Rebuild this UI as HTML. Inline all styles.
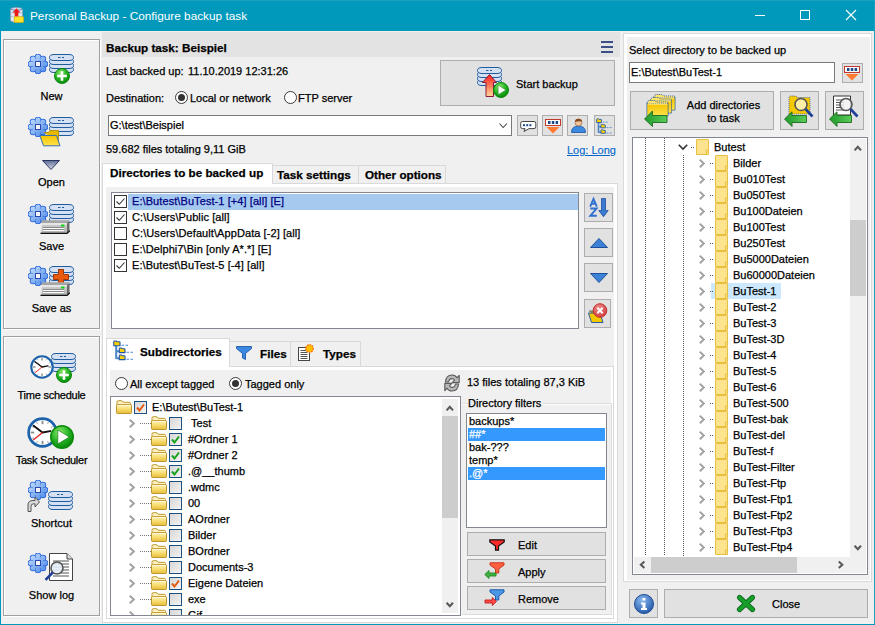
<!DOCTYPE html><html><head><meta charset="utf-8"><style>
*{box-sizing:border-box;margin:0;padding:0}
html,body{width:875px;height:625px;overflow:hidden;background:#f0f0f0}
body{position:relative;font-family:"Liberation Sans",sans-serif;font-size:11px;color:#000;-webkit-text-stroke:0.25px currentColor}
.a{position:absolute}
.t{position:absolute;white-space:nowrap;line-height:13px;height:13px}
.b{font-weight:bold;font-size:11.7px}
.btn{position:absolute;background:#e1e1e1;border:1px solid #adadad}
.edit{position:absolute;background:#fff;border:1px solid #7a7a7a}
.lb{position:absolute;background:#fff;border:1px solid #828790}
.cb{position:absolute;width:13px;height:13px;border:1px solid #333;background:#fff}
.cb2{position:absolute;width:13px;height:13px;border:1px solid #1c5180;background:linear-gradient(135deg,#d6d6d6,#f4f4f4)}
.rad{position:absolute;width:13px;height:13px;border:1.1px solid #3a3a3a;border-radius:50%;background:#fff}
.rad.on::after{content:"";position:absolute;left:2px;top:2px;width:7px;height:7px;border-radius:50%;background:#333}
svg{position:absolute;overflow:visible}
.bev{position:absolute;border:1px solid #a0a0a0;box-shadow:inset 1px 1px 0 #fff,1px 1px 0 #fff}
.tab{position:absolute;background:#f0f0f0;border:1px solid #d9d9d9}
.page{position:absolute;background:#fff;border:1px solid #d9d9d9}
</style></head><body>
<svg width="0" height="0" style="position:absolute"><defs>
<linearGradient id="gGear" gradientUnits="userSpaceOnUse" x1="3" y1="3" x2="17" y2="17"><stop offset="0" stop-color="#bcd8fc"/><stop offset="1" stop-color="#5590e8"/></linearGradient>
<radialGradient id="gGreen" cx="0.4" cy="0.3" r="0.7"><stop offset="0" stop-color="#8ee86a"/><stop offset="0.6" stop-color="#22b022"/><stop offset="1" stop-color="#0a8a0a"/></radialGradient>
<linearGradient id="gFold" x1="0" y1="0" x2="0" y2="1"><stop offset="0" stop-color="#fff6c0"/><stop offset="0.5" stop-color="#f8dc70"/><stop offset="1" stop-color="#e6bc38"/></linearGradient>
<linearGradient id="gFoldY" x1="0" y1="0" x2="0" y2="1"><stop offset="0" stop-color="#f5c400"/><stop offset="1" stop-color="#ffe14a"/></linearGradient>
<linearGradient id="gArrowR" x1="0" y1="0" x2="0" y2="1"><stop offset="0" stop-color="#ff1a1a"/><stop offset="1" stop-color="#ffd89a"/></linearGradient>
<linearGradient id="gArrowG" x1="0" y1="0" x2="1" y2="0"><stop offset="0" stop-color="#1f9a2a"/><stop offset="1" stop-color="#5ccc5a"/></linearGradient>
<linearGradient id="gTri" x1="0" y1="0" x2="0" y2="1"><stop offset="0" stop-color="#5a6a94"/><stop offset="1" stop-color="#d8dcea"/></linearGradient>
<linearGradient id="gDrive" x1="0" y1="0" x2="0" y2="1"><stop offset="0" stop-color="#d0d0d0"/><stop offset="1" stop-color="#b0b0b0"/></linearGradient>
<radialGradient id="gInfo" cx="0.4" cy="0.3" r="0.75"><stop offset="0" stop-color="#8ab8f0"/><stop offset="1" stop-color="#1f56a8"/></radialGradient>
<radialGradient id="gRed" cx="0.4" cy="0.3" r="0.75"><stop offset="0" stop-color="#f08a8a"/><stop offset="1" stop-color="#d03a3a"/></radialGradient>
<symbol id="gear" viewBox="0 0 20 20"><g fill="#2560d8" stroke="#2560d8" stroke-width="1.6"><circle cx="17.00" cy="10.00" r="2.5"/><circle cx="14.95" cy="14.95" r="2.5"/><circle cx="10.00" cy="17.00" r="2.5"/><circle cx="5.05" cy="14.95" r="2.5"/><circle cx="3.00" cy="10.00" r="2.5"/><circle cx="5.05" cy="5.05" r="2.5"/><circle cx="10.00" cy="3.00" r="2.5"/><circle cx="14.95" cy="5.05" r="2.5"/><circle cx="10" cy="10" r="5.6"/></g><g fill="url(#gGear)"><circle cx="17.00" cy="10.00" r="2.5"/><circle cx="14.95" cy="14.95" r="2.5"/><circle cx="10.00" cy="17.00" r="2.5"/><circle cx="5.05" cy="14.95" r="2.5"/><circle cx="3.00" cy="10.00" r="2.5"/><circle cx="5.05" cy="5.05" r="2.5"/><circle cx="10.00" cy="3.00" r="2.5"/><circle cx="14.95" cy="5.05" r="2.5"/><circle cx="10" cy="10" r="5.6"/></g><rect x="7.5" y="7.5" width="5" height="5" fill="#f4f4f4" stroke="#2848b0" stroke-width="1"/></symbol>
<symbol id="db" viewBox="0 0 25 19"><rect x="0.5" y="12.5" width="24" height="6" rx="4.5" ry="3" fill="#d5e0f2" stroke="#1f5c9e" stroke-width="1"/><rect x="0.5" y="8.5" width="24" height="6" rx="4.5" ry="3" fill="#d5e0f2" stroke="#1f5c9e" stroke-width="1"/><rect x="0.5" y="4.5" width="24" height="6" rx="4.5" ry="3" fill="#d5e0f2" stroke="#1f5c9e" stroke-width="1"/><rect x="0.5" y="0.5" width="24" height="6" rx="4.5" ry="3" fill="#d5e0f2" stroke="#1f5c9e" stroke-width="1"/><path d="M9 3.5h2.5M13 3.5h2" stroke="#1f5c9e" stroke-width="1"/></symbol>
<symbol id="plus" viewBox="0 0 16 16"><circle cx="8" cy="8" r="7.5" fill="url(#gGreen)" stroke="#0c8a0c" stroke-width="1"/><path d="M8 3.2v9.6M3.2 8h9.6" stroke="#fff" stroke-width="2.6"/></symbol>
<symbol id="play" viewBox="0 0 16 16"><circle cx="8" cy="8" r="7.5" fill="url(#gGreen)" stroke="#0c8a0c" stroke-width="1"/><path d="M5.2 3.3L12.9 8L5.2 12.7Z" fill="#fff" stroke="#0a6a0a" stroke-width="0.4"/></symbol>
<symbol id="drive" viewBox="0 0 30 14"><path d="M2.5 0.3H29.5L27 3.5H0.5Z" fill="#a6a6a6"/><rect x="0.5" y="3.5" width="26.5" height="9.5" fill="url(#gDrive)"/><path d="M1 4H26.5M1 4V12.5" stroke="#fff" stroke-width="1"/><path d="M27 3.5L29.5 0.5V11L27 13.3Z" fill="#6a6a6a"/><path d="M0.5 13.4H27L29.8 10.8" fill="none" stroke="#111" stroke-width="1.3"/><path d="M3 7.5H24M3 9.5H24" stroke="#8a8a8a" stroke-width="1"/><path d="M3 8.5H24M3 10.5H24" stroke="#fafafa" stroke-width="1"/><rect x="21" y="4.5" width="3.5" height="2" fill="#12d412"/></symbol>
<symbol id="clock" viewBox="0 0 32 32"><circle cx="16" cy="16" r="14.3" fill="#fff" stroke="#1c63ab" stroke-width="2.8"/><line x1="24.60" y1="16.00" x2="28.20" y2="16.00" stroke="#8a8a8a" stroke-width="1.8"/><line x1="24.83" y1="21.10" x2="26.57" y2="22.10" stroke="#b0b0b0" stroke-width="1.2"/><line x1="21.10" y1="24.83" x2="22.10" y2="26.57" stroke="#b0b0b0" stroke-width="1.2"/><line x1="16.00" y1="24.60" x2="16.00" y2="28.20" stroke="#8a8a8a" stroke-width="1.8"/><line x1="10.90" y1="24.83" x2="9.90" y2="26.57" stroke="#b0b0b0" stroke-width="1.2"/><line x1="7.17" y1="21.10" x2="5.43" y2="22.10" stroke="#b0b0b0" stroke-width="1.2"/><line x1="7.40" y1="16.00" x2="3.80" y2="16.00" stroke="#8a8a8a" stroke-width="1.8"/><line x1="7.17" y1="10.90" x2="5.43" y2="9.90" stroke="#b0b0b0" stroke-width="1.2"/><line x1="10.90" y1="7.17" x2="9.90" y2="5.43" stroke="#b0b0b0" stroke-width="1.2"/><line x1="16.00" y1="7.40" x2="16.00" y2="3.80" stroke="#8a8a8a" stroke-width="1.8"/><line x1="21.10" y1="7.17" x2="22.10" y2="5.43" stroke="#b0b0b0" stroke-width="1.2"/><line x1="24.83" y1="10.90" x2="26.57" y2="9.90" stroke="#b0b0b0" stroke-width="1.2"/><path d="M16 16L6.8 9M16 16L24 14.5" stroke="#111" stroke-width="1.9" stroke-linecap="round"/><path d="M16 16L6.5 23.8" stroke="#e01818" stroke-width="1.2"/></symbol>
<symbol id="foldT" viewBox="0 0 16 14"><path d="M1 12V2Q1 0.7 2.2 0.7H5.8L7.2 2.3H13.3Q14.5 2.3 14.5 3.5V6H1Z" fill="#fdf2c0" stroke="#c09530" stroke-width="1"/><path d="M0.5 5.4Q0.5 4.6 1.3 4.6H14.7Q15.5 4.6 15.5 5.4V12.7Q15.5 13.5 14.7 13.5H1.3Q0.5 13.5 0.5 12.7Z" fill="url(#gFold)" stroke="#c09530" stroke-width="1"/><path d="M1.5 5.6H14.5" stroke="#fff8d8" stroke-width="0.9"/></symbol>
<symbol id="foldR" viewBox="0 0 13 16"><path d="M0.5 1Q0.5 0.5 1 0.5H12Q12.5 0.5 12.5 1V15.5H0.5Z" fill="#fde38e" stroke="#e8c040" stroke-width="1"/><path d="M10.5 11V15.5M10.5 11H12.5" stroke="#e8c040" stroke-width="1"/></symbol>
</defs></svg>
<div class="a" style="left:0;top:0;width:875px;height:31px;background:#0099bc"></div>
<div class="a" style="left:0;top:0;width:1px;height:625px;background:#0099bc"></div>
<div class="a" style="left:874px;top:0;width:1px;height:625px;background:#1ba0c0"></div>
<div class="a" style="left:0;top:0;width:875px;height:1px;background:#1ba0c0"></div>
<div class="a" style="left:0;top:624px;width:875px;height:1px;background:#0099bc"></div>
<svg style="left:10px;top:7px" width="14" height="16"><path d="M0.5 2.5Q0.5 0.5 6.5 0.5Q12.5 0.5 12.5 2.5V13Q12.5 15.2 6.5 15.2Q0.5 15.2 0.5 13Z" fill="#dfe8f2" stroke="#8a9bb0" stroke-width="0.8"/><path d="M1 5.5Q6.5 7.5 12 5.5M1 9.5Q6.5 11.5 12 9.5" fill="none" stroke="#a8b8cc" stroke-width="0.8"/><path d="M1 2.5Q6.5 4.5 12 2.5" fill="none" stroke="#5a8ad0" stroke-width="1"/><path d="M6.5 1.2L10.5 5.5H8.3V9.8H4.7V5.5H2.5Z" fill="#ee1a1a"/><rect x="4.2" y="9.8" width="9.3" height="5.6" fill="#ffe22a" stroke="#d8b000" stroke-width="0.6"/></svg>
<div class="t" style="left:30px;top:8.5px;color:#fff;-webkit-text-stroke:0;font-size:11.8px;line-height:14px;height:14px">Personal Backup - Configure backup task</div>
<div class="a" style="left:755px;top:15px;width:10px;height:1px;background:#fff"></div>
<div class="a" style="left:800px;top:10px;width:10px;height:10px;border:1px solid #fff"></div>
<svg style="left:846px;top:10px" width="10" height="10"><path d="M0 0L10 10M10 0L0 10" stroke="#fff" stroke-width="1.1"/></svg>
<div class="bev" style="left:3px;top:39px;width:97px;height:290px"></div>
<div class="bev" style="left:3px;top:336px;width:97px;height:280px"></div>
<div class="t" style="left:0;top:90px;width:103px;text-align:center;">New</div>
<div class="t" style="left:0;top:176px;width:103px;text-align:center;">Open</div>
<div class="t" style="left:0;top:240px;width:103px;text-align:center;">Save</div>
<div class="t" style="left:0;top:302px;width:103px;text-align:center;">Save as</div>
<div class="t" style="left:0;top:389px;width:103px;text-align:center;letter-spacing:-0.25px;">Time schedule</div>
<div class="t" style="left:0;top:454px;width:103px;text-align:center;letter-spacing:-0.25px;">Task Scheduler</div>
<div class="t" style="left:0;top:517px;width:103px;text-align:center;">Shortcut</div>
<div class="t" style="left:0;top:589px;width:103px;text-align:center;">Show log</div>
<svg style="left:28px;top:54px" width="20" height="20" viewBox="0 0 20 20"><use href="#gear" x="0" y="0" width="20" height="20"/></svg>
<svg style="left:49px;top:54px" width="25" height="19" viewBox="0 0 25 19"><use href="#db" x="0" y="0" width="25" height="19"/></svg>
<svg style="left:54px;top:68px" width="16" height="16" viewBox="0 0 16 16"><use href="#plus" x="0" y="0" width="16" height="16"/></svg>
<svg style="left:28px;top:117px" width="20" height="20" viewBox="0 0 20 20"><use href="#gear" x="0" y="0" width="20" height="20"/></svg>
<svg style="left:49px;top:117px" width="25" height="19" viewBox="0 0 25 19"><use href="#db" x="0" y="0" width="25" height="19"/></svg>
<svg style="left:39px;top:129px" width="22" height="18"><path d="M5 3.5H9.5L11 1.5H19.5V14" fill="#e8b800" stroke="#b08a00" stroke-width="0.8"/><path d="M0.8 6.5H17.5L21 16.8H4.5Z" fill="url(#gFoldY)" stroke="#3a70b0" stroke-width="1"/></svg>
<svg style="left:42px;top:160px" width="18" height="10"><path d="M0.5 0.5H17.5L9 9.5Z" fill="url(#gTri)" stroke="#2a3460" stroke-width="1"/></svg>
<svg style="left:28px;top:204px" width="20" height="20" viewBox="0 0 20 20"><use href="#gear" x="0" y="0" width="20" height="20"/></svg>
<svg style="left:49px;top:204px" width="25" height="19" viewBox="0 0 25 19"><use href="#db" x="0" y="0" width="25" height="19"/></svg>
<svg style="left:40px;top:220px" width="30" height="14" viewBox="0 0 30 14"><use href="#drive" x="0" y="0" width="30" height="14"/></svg>
<svg style="left:28px;top:266px" width="20" height="20" viewBox="0 0 20 20"><use href="#gear" x="0" y="0" width="20" height="20"/></svg>
<svg style="left:49px;top:266px" width="25" height="19" viewBox="0 0 25 19"><use href="#db" x="0" y="0" width="25" height="19"/></svg>
<svg style="left:53px;top:269px" width="16" height="16"><path d="M5.5 0.5h5v5h5v5h-5v5h-5v-5h-5v-5h5Z" fill="#e85a10" stroke="#a83800" stroke-width="1"/></svg>
<svg style="left:40px;top:282px" width="30" height="14" viewBox="0 0 30 14"><use href="#drive" x="0" y="0" width="30" height="14"/></svg>
<svg style="left:51px;top:353px" width="25" height="19" viewBox="0 0 25 19"><use href="#db" x="0" y="0" width="25" height="19"/></svg>
<svg style="left:30px;top:355px" width="24" height="24" viewBox="0 0 24 24"><use href="#clock" x="0" y="0" width="24" height="24"/></svg>
<svg style="left:56px;top:367px" width="16" height="16" viewBox="0 0 16 16"><use href="#plus" x="0" y="0" width="16" height="16"/></svg>
<svg style="left:27px;top:417px" width="31" height="31" viewBox="0 0 31 31"><use href="#clock" x="0" y="0" width="31" height="31"/></svg>
<svg style="left:50px;top:425px" width="24" height="24" viewBox="0 0 24 24"><use href="#play" x="0" y="0" width="24" height="24"/></svg>
<svg style="left:28px;top:480px" width="20" height="20" viewBox="0 0 20 20"><use href="#gear" x="0" y="0" width="20" height="20"/></svg>
<svg style="left:48px;top:491px" width="25" height="19" viewBox="0 0 25 19"><use href="#db" x="0" y="0" width="25" height="19"/></svg>
<svg style="left:27px;top:496px" width="13" height="16"><path d="M1 15.5V9Q1 4.5 6 4.5H8V1L12.5 6L8 11V7.8H6.5Q4 7.8 4 10.5V15.5Z" fill="#d8d8d8" stroke="#555" stroke-width="1"/></svg>
<svg style="left:28px;top:553px" width="20" height="20" viewBox="0 0 20 20"><use href="#gear" x="0" y="0" width="20" height="20"/></svg>
<svg style="left:44px;top:553px" width="30" height="29"><path d="M5.5 0.5H23L28.5 6V27.5H5.5Z" fill="#fff" stroke="#444" stroke-width="1"/><path d="M23 0.5V6H28.5" fill="#ddd" stroke="#444" stroke-width="1"/><path d="M9 8h16" stroke="#555" stroke-width="1"/><path d="M9 11h16" stroke="#555" stroke-width="1"/><path d="M9 14h16" stroke="#555" stroke-width="1"/><path d="M9 17h16" stroke="#555" stroke-width="1"/><path d="M9 20h16" stroke="#555" stroke-width="1"/><path d="M9 23h16" stroke="#555" stroke-width="1"/><circle cx="13" cy="15" r="6" fill="rgba(230,240,250,0.85)" stroke="#555" stroke-width="1.6"/><path d="M8.8 19.5L1.5 26.8" stroke="#1e3f9a" stroke-width="2.6"/></svg>
<div class="a" style="left:102px;top:32px;width:518px;height:25px;background:#e3e3e3"></div>
<div class="t b" style="left:106px;top:41px">Backup task: Beispiel</div>
<div class="a" style="left:601px;top:41px;width:12px;height:2px;background:#3c4f86"></div>
<div class="a" style="left:601px;top:46px;width:12px;height:2px;background:#3c4f86"></div>
<div class="a" style="left:601px;top:51px;width:12px;height:2px;background:#3c4f86"></div>
<div class="t" style="left:106px;top:65px">Last backed up:</div>
<div class="t" style="left:188px;top:65px">11.10.2019 12:31:26</div>
<div class="t" style="left:106px;top:92px">Destination:</div>
<div class="rad on" style="left:175px;top:91px"></div>
<div class="t" style="left:190px;top:92px">Local or network</div>
<div class="rad" style="left:284px;top:91px"></div>
<div class="t" style="left:298px;top:92px">FTP server</div>
<div class="btn" style="left:440px;top:60px;width:175px;height:46px"></div>
<svg style="left:477px;top:67px" width="25" height="19" viewBox="0 0 25 19"><use href="#db" x="0" y="0" width="25" height="19"/></svg>
<svg style="left:482px;top:74px" width="16" height="24"><path d="M7.5 0.5L14.5 8.5H11.5V22.5H4V8.5H0.5Z" fill="url(#gArrowR)" stroke="#8a1a3a" stroke-width="1"/></svg>
<svg style="left:493px;top:82px" width="16" height="16" viewBox="0 0 16 16"><use href="#play" x="0" y="0" width="16" height="16"/></svg>
<div class="t" style="left:516px;top:78px">Start backup</div>
<div class="edit" style="left:108px;top:115px;width:404px;height:21px"></div>
<div class="t" style="left:110px;top:119px">G:\test\Beispiel</div>
<svg style="left:499px;top:123px" width="9" height="6"><path d="M0.5 0.5L4.2 4.5L7.9 0.5" fill="none" stroke="#444" stroke-width="1.1"/></svg>
<div class="btn" style="left:517px;top:115px;width:21px;height:21px"></div>
<div class="btn" style="left:542px;top:115px;width:21px;height:21px"></div>
<div class="btn" style="left:567px;top:115px;width:21px;height:21px"></div>
<div class="btn" style="left:594px;top:115px;width:21px;height:21px"></div>
<svg style="left:520px;top:121px" width="17" height="12"><path d="M2.5 0.5H14Q15.8 0.5 15.8 2.3V5.8Q15.8 7.6 14 7.6H9L4 10.5L5 7.6H2.5Q0.7 7.6 0.7 5.8V2.3Q0.7 0.5 2.5 0.5Z" fill="#fff" stroke="#444" stroke-width="1"/><rect x="3" y="3.2" width="2" height="2" fill="#1e4a8a"/><rect x="6.2" y="3.2" width="2" height="2" fill="#1e4a8a"/><rect x="9.4" y="3.2" width="2" height="2" fill="#1e4a8a"/></svg>
<svg style="left:545px;top:119px" width="16" height="15"><rect x="0.5" y="0.5" width="15" height="6" fill="#fff" stroke="#c0392b" stroke-width="1"/><rect x="3" y="2" width="2.5" height="3" fill="#1e4a8a"/><rect x="6.8" y="2" width="2.5" height="3" fill="#1e4a8a"/><rect x="10.6" y="2" width="2.5" height="3" fill="#1e4a8a"/><path d="M1.5 8H14.5L8 14.5Z" fill="#ff7a30"/></svg>
<svg style="left:571px;top:118px" width="15" height="15"><path d="M0.5 14.5Q0.5 8 7.5 8Q14.5 8 14.5 14.5Z" fill="#3a8ae0" stroke="#1d4f9a" stroke-width="0.8"/><circle cx="7.5" cy="4.5" r="3.5" fill="#f2c29a" stroke="#8a5a3a" stroke-width="0.6"/><path d="M4 4Q4 0.8 7.5 0.8Q11 0.8 11 4Q9 2.5 4 4Z" fill="#8a4a20"/></svg>
<svg style="left:596px;top:118px" width="16.4" height="16.4" viewBox="0 0 21 21"><path d="M3.2 5V19M3.2 11.3H6.5M3.2 18.3H6.5" stroke="#4a86cc" stroke-width="2" fill="none"/><path d="M0.8 5.8V1.8Q0.8 1 1.6 1H3.2L3.8 1.8H6.4Q7 1.8 7 2.4V5.8Z" fill="#ffd200" stroke="#1f56a6" stroke-width="1.1"/><path d="M6.3 12.6V8.8Q6.3 8 7.1 8H8.6L9.2 8.8H11.4Q12 8.8 12 9.4V12.6Z" fill="#ffd200" stroke="#1f56a6" stroke-width="1.1"/><path d="M6.3 19.6V15.8Q6.3 15 7.1 15H8.6L9.2 15.8H11.4Q12 15.8 12 16.4V19.6Z" fill="#ffd200" stroke="#1f56a6" stroke-width="1.1"/><path d="M8.5 5.3H11M12.5 5.3H15M13.5 12.3H16M17.5 12.3H20M13.5 19.3H16M17.5 19.3H20" stroke="#4a86cc" stroke-width="1.1"/></svg>
<div class="t" style="left:106px;top:143px">59.682 files totaling 9,11 GiB</div>
<div class="t" style="left:567px;top:144px;color:#0066cc;text-decoration:underline;-webkit-text-stroke:0.1px #0066cc">Log: Long</div>
<div class="page" style="left:102px;top:183px;width:516px;height:440px"></div>
<div class="a" style="left:106px;top:187px;width:508px;height:432px;background:#f0f0f0"></div>
<div class="tab" style="left:272px;top:165px;width:87px;height:19px"></div>
<div class="tab" style="left:358px;top:165px;width:88px;height:19px"></div>
<div class="a" style="left:102px;top:163px;width:171px;height:21px;background:#fff;border:1px solid #d9d9d9;border-bottom:none"></div>
<div class="t b" style="left:110px;top:166px">Directories to be backed up</div>
<div class="t b" style="left:277px;top:168px">Task settings</div>
<div class="t b" style="left:365px;top:168px">Other options</div>
<div class="lb" style="left:111px;top:192px;width:468px;height:137px"></div>
<div class="a" style="left:128px;top:194px;width:450px;height:16px;background:#a6c9f0"></div>
<div class="cb" style="left:114px;top:195px"></div>
<svg style="left:114px;top:195px" width="13" height="13"><path d="M2.5 6.5L5.3 9.3L10.5 3.5" fill="none" stroke="#333" stroke-width="1.1"/></svg>
<div class="t" style="left:132px;top:195px;color:#000080;letter-spacing:0.08px">E:\Butest\BuTest-1 [+4] [all] [E]</div>
<div class="cb" style="left:114px;top:211px"></div>
<svg style="left:114px;top:211px" width="13" height="13"><path d="M2.5 6.5L5.3 9.3L10.5 3.5" fill="none" stroke="#333" stroke-width="1.1"/></svg>
<div class="t" style="left:132px;top:211px;color:#000;letter-spacing:0.08px">C:\Users\Public [all]</div>
<div class="cb" style="left:114px;top:227px"></div>
<div class="t" style="left:132px;top:227px;color:#000;letter-spacing:0.08px">C:\Users\Default\AppData [-2] [all]</div>
<div class="cb" style="left:114px;top:243px"></div>
<div class="t" style="left:132px;top:243px;color:#000;letter-spacing:0.08px">E:\Delphi7\Bin [only A*.*] [E]</div>
<div class="cb" style="left:114px;top:259px"></div>
<svg style="left:114px;top:259px" width="13" height="13"><path d="M2.5 6.5L5.3 9.3L10.5 3.5" fill="none" stroke="#333" stroke-width="1.1"/></svg>
<div class="t" style="left:132px;top:259px;color:#000;letter-spacing:0.08px">E:\Butest\BuTest-5 [-4] [all]</div>
<div class="btn" style="left:584px;top:193px;width:29px;height:29px"></div>
<div class="btn" style="left:584px;top:228px;width:29px;height:29px"></div>
<div class="btn" style="left:584px;top:263px;width:29px;height:29px"></div>
<div class="btn" style="left:584px;top:299px;width:27px;height:29px"></div>
<svg style="left:589px;top:198px" width="20" height="20"><path d="M1.2 8.6L4.5 0.9L7.8 8.6M2.5 5.8H6.5" fill="none" stroke="#2f6fd0" stroke-width="1.9"/><path d="M1.3 10.5H7.6L1.3 17.8H7.8" fill="none" stroke="#2f6fd0" stroke-width="1.9"/><path d="M12.5 0.5V12.5H9.8L14.5 18.8L19.2 12.5H16.5V0.5Z" fill="#3a7ad0" stroke="#1e4fa0" stroke-width="0.8"/></svg>
<svg style="left:590px;top:238px" width="18" height="10"><path d="M9 0.5L17.5 9.5H0.5Z" fill="#3b82d6" stroke="#1e4f9a" stroke-width="1"/></svg>
<svg style="left:590px;top:273px" width="18" height="10"><path d="M0.5 0.5H17.5L9 9.5Z" fill="#3b82d6" stroke="#1e4f9a" stroke-width="1"/></svg>
<svg style="left:588px;top:303px" width="20" height="20"><path d="M1 8H6L7 6.5H12V17" fill="#c8a000" stroke="#2a5aa0" stroke-width="0.8"/><path d="M0.5 10H12L15 19.5H3.5Z" fill="#f0c800" stroke="#2a5aa0" stroke-width="1"/><circle cx="12" cy="7.5" r="6.8" fill="url(#gRed)" stroke="#c03030" stroke-width="1"/><path d="M9.3 4.8L14.7 10.2M14.7 4.8L9.3 10.2" stroke="#fff" stroke-width="2"/></svg>
<div class="page" style="left:106px;top:366px;width:508px;height:253px"></div>
<div class="a" style="left:110px;top:370px;width:501px;height:245px;background:#f0f0f0"></div>
<div class="tab" style="left:229px;top:341px;width:62px;height:26px"></div>
<div class="tab" style="left:290px;top:341px;width:71px;height:26px"></div>
<div class="a" style="left:106px;top:338px;width:124px;height:29px;background:#fff;border:1px solid #d9d9d9;border-bottom:none"></div>
<svg style="left:113px;top:340px" width="21.0" height="21.0" viewBox="0 0 21 21"><path d="M3.2 5V19M3.2 11.3H6.5M3.2 18.3H6.5" stroke="#4a86cc" stroke-width="2" fill="none"/><path d="M0.8 5.8V1.8Q0.8 1 1.6 1H3.2L3.8 1.8H6.4Q7 1.8 7 2.4V5.8Z" fill="#ffd200" stroke="#1f56a6" stroke-width="1.1"/><path d="M6.3 12.6V8.8Q6.3 8 7.1 8H8.6L9.2 8.8H11.4Q12 8.8 12 9.4V12.6Z" fill="#ffd200" stroke="#1f56a6" stroke-width="1.1"/><path d="M6.3 19.6V15.8Q6.3 15 7.1 15H8.6L9.2 15.8H11.4Q12 15.8 12 16.4V19.6Z" fill="#ffd200" stroke="#1f56a6" stroke-width="1.1"/><path d="M8.5 5.3H11M12.5 5.3H15M13.5 12.3H16M17.5 12.3H20M13.5 19.3H16M17.5 19.3H20" stroke="#4a86cc" stroke-width="1.1"/></svg>
<div class="t b" style="left:140px;top:345px">Subdirectories</div>
<svg style="left:236px;top:346px" width="16" height="14"><path d="M0.5 0.5H15.5V2.5L9.5 7.5V13.5L6.5 12V7.5L0.5 2.5Z" fill="#3a88e0" stroke="#1e5aa8" stroke-width="0.9"/></svg>
<div class="t b" style="left:260px;top:347px">Files</div>
<svg style="left:298px;top:344px" width="16" height="17"><rect x="0.5" y="3.5" width="11" height="13" fill="#fff" stroke="#444" stroke-width="1"/><path d="M2.5 6.5h7" stroke="#555" stroke-width="1"/><path d="M2.5 8.5h7" stroke="#555" stroke-width="1"/><path d="M2.5 10.5h7" stroke="#555" stroke-width="1"/><path d="M2.5 12.5h7" stroke="#555" stroke-width="1"/><path d="M2.5 14.5h7" stroke="#555" stroke-width="1"/><circle cx="11.5" cy="4.5" r="3.8" fill="#ffc000" stroke="#ff6000" stroke-width="1.2" stroke-dasharray="1.5 1"/></svg>
<div class="t b" style="left:323px;top:347px">Types</div>
<div class="rad" style="left:115px;top:377px"></div>
<div class="t" style="left:130px;top:378px">All except tagged</div>
<div class="rad on" style="left:229px;top:377px"></div>
<div class="t" style="left:245px;top:378px">Tagged only</div>
<div class="lb" style="left:110px;top:396px;width:351px;height:220px;overflow:hidden"></div>
<div class="a" style="left:111px;top:397px;width:331px;height:218px;overflow:hidden" id="st">
<svg style="left:5px;top:3px" width="16" height="14" viewBox="0 0 16 14"><use href="#foldT" x="0" y="0" width="16" height="14"/></svg>
<div class="cb2" style="left:23px;top:4px"></div>
<svg style="left:23px;top:4px" width="13" height="13"><path d="M3 6.5L5.5 9.5L10 3.5" fill="none" stroke="#e05a10" stroke-width="2"/></svg>
<div class="t" style="left:41px;top:4px">E:\Butest\BuTest-1</div>
<svg style="left:18px;top:22px" width="7" height="9"><path d="M0.8 0.8L4.8 4.5L0.8 8.2" fill="none" stroke="#a0a0a0" stroke-width="1.9"/></svg>
<div class="a" style="left:29px;top:26px;width:11px;height:1px;background:repeating-linear-gradient(90deg,#777 0 1px,transparent 1px 2px)"></div>
<svg style="left:40px;top:19px" width="16" height="14" viewBox="0 0 16 14"><use href="#foldT" x="0" y="0" width="16" height="14"/></svg>
<div class="cb2" style="left:58px;top:20px"></div>
<div class="t" style="left:77px;top:20px">&nbsp;Test</div>
<svg style="left:18px;top:38px" width="7" height="9"><path d="M0.8 0.8L4.8 4.5L0.8 8.2" fill="none" stroke="#a0a0a0" stroke-width="1.9"/></svg>
<div class="a" style="left:29px;top:42px;width:11px;height:1px;background:repeating-linear-gradient(90deg,#777 0 1px,transparent 1px 2px)"></div>
<svg style="left:40px;top:35px" width="16" height="14" viewBox="0 0 16 14"><use href="#foldT" x="0" y="0" width="16" height="14"/></svg>
<div class="cb2" style="left:58px;top:36px"></div>
<svg style="left:58px;top:36px" width="13" height="13"><path d="M3 6.5L5.5 9.5L10 3.5" fill="none" stroke="#18a018" stroke-width="2"/></svg>
<div class="t" style="left:77px;top:36px">#Ordner&nbsp;1</div>
<svg style="left:18px;top:54px" width="7" height="9"><path d="M0.8 0.8L4.8 4.5L0.8 8.2" fill="none" stroke="#a0a0a0" stroke-width="1.9"/></svg>
<div class="a" style="left:29px;top:58px;width:11px;height:1px;background:repeating-linear-gradient(90deg,#777 0 1px,transparent 1px 2px)"></div>
<svg style="left:40px;top:51px" width="16" height="14" viewBox="0 0 16 14"><use href="#foldT" x="0" y="0" width="16" height="14"/></svg>
<div class="cb2" style="left:58px;top:52px"></div>
<svg style="left:58px;top:52px" width="13" height="13"><path d="M3 6.5L5.5 9.5L10 3.5" fill="none" stroke="#18a018" stroke-width="2"/></svg>
<div class="t" style="left:77px;top:52px">#Ordner&nbsp;2</div>
<svg style="left:18px;top:70px" width="7" height="9"><path d="M0.8 0.8L4.8 4.5L0.8 8.2" fill="none" stroke="#a0a0a0" stroke-width="1.9"/></svg>
<div class="a" style="left:29px;top:74px;width:11px;height:1px;background:repeating-linear-gradient(90deg,#777 0 1px,transparent 1px 2px)"></div>
<svg style="left:40px;top:67px" width="16" height="14" viewBox="0 0 16 14"><use href="#foldT" x="0" y="0" width="16" height="14"/></svg>
<div class="cb2" style="left:58px;top:68px"></div>
<svg style="left:58px;top:68px" width="13" height="13"><path d="M3 6.5L5.5 9.5L10 3.5" fill="none" stroke="#18a018" stroke-width="2"/></svg>
<div class="t" style="left:77px;top:68px">.@__thumb</div>
<svg style="left:18px;top:86px" width="7" height="9"><path d="M0.8 0.8L4.8 4.5L0.8 8.2" fill="none" stroke="#a0a0a0" stroke-width="1.9"/></svg>
<div class="a" style="left:29px;top:90px;width:11px;height:1px;background:repeating-linear-gradient(90deg,#777 0 1px,transparent 1px 2px)"></div>
<svg style="left:40px;top:83px" width="16" height="14" viewBox="0 0 16 14"><use href="#foldT" x="0" y="0" width="16" height="14"/></svg>
<div class="cb2" style="left:58px;top:84px"></div>
<div class="t" style="left:77px;top:84px">.wdmc</div>
<svg style="left:18px;top:102px" width="7" height="9"><path d="M0.8 0.8L4.8 4.5L0.8 8.2" fill="none" stroke="#a0a0a0" stroke-width="1.9"/></svg>
<div class="a" style="left:29px;top:106px;width:11px;height:1px;background:repeating-linear-gradient(90deg,#777 0 1px,transparent 1px 2px)"></div>
<svg style="left:40px;top:99px" width="16" height="14" viewBox="0 0 16 14"><use href="#foldT" x="0" y="0" width="16" height="14"/></svg>
<div class="cb2" style="left:58px;top:100px"></div>
<div class="t" style="left:77px;top:100px">00</div>
<svg style="left:18px;top:118px" width="7" height="9"><path d="M0.8 0.8L4.8 4.5L0.8 8.2" fill="none" stroke="#a0a0a0" stroke-width="1.9"/></svg>
<div class="a" style="left:29px;top:122px;width:11px;height:1px;background:repeating-linear-gradient(90deg,#777 0 1px,transparent 1px 2px)"></div>
<svg style="left:40px;top:115px" width="16" height="14" viewBox="0 0 16 14"><use href="#foldT" x="0" y="0" width="16" height="14"/></svg>
<div class="cb2" style="left:58px;top:116px"></div>
<div class="t" style="left:77px;top:116px">AOrdner</div>
<svg style="left:18px;top:134px" width="7" height="9"><path d="M0.8 0.8L4.8 4.5L0.8 8.2" fill="none" stroke="#a0a0a0" stroke-width="1.9"/></svg>
<div class="a" style="left:29px;top:138px;width:11px;height:1px;background:repeating-linear-gradient(90deg,#777 0 1px,transparent 1px 2px)"></div>
<svg style="left:40px;top:131px" width="16" height="14" viewBox="0 0 16 14"><use href="#foldT" x="0" y="0" width="16" height="14"/></svg>
<div class="cb2" style="left:58px;top:132px"></div>
<div class="t" style="left:77px;top:132px">Bilder</div>
<svg style="left:18px;top:150px" width="7" height="9"><path d="M0.8 0.8L4.8 4.5L0.8 8.2" fill="none" stroke="#a0a0a0" stroke-width="1.9"/></svg>
<div class="a" style="left:29px;top:154px;width:11px;height:1px;background:repeating-linear-gradient(90deg,#777 0 1px,transparent 1px 2px)"></div>
<svg style="left:40px;top:147px" width="16" height="14" viewBox="0 0 16 14"><use href="#foldT" x="0" y="0" width="16" height="14"/></svg>
<div class="cb2" style="left:58px;top:148px"></div>
<div class="t" style="left:77px;top:148px">BOrdner</div>
<svg style="left:18px;top:166px" width="7" height="9"><path d="M0.8 0.8L4.8 4.5L0.8 8.2" fill="none" stroke="#a0a0a0" stroke-width="1.9"/></svg>
<div class="a" style="left:29px;top:170px;width:11px;height:1px;background:repeating-linear-gradient(90deg,#777 0 1px,transparent 1px 2px)"></div>
<svg style="left:40px;top:163px" width="16" height="14" viewBox="0 0 16 14"><use href="#foldT" x="0" y="0" width="16" height="14"/></svg>
<div class="cb2" style="left:58px;top:164px"></div>
<div class="t" style="left:77px;top:164px">Documents-3</div>
<svg style="left:18px;top:182px" width="7" height="9"><path d="M0.8 0.8L4.8 4.5L0.8 8.2" fill="none" stroke="#a0a0a0" stroke-width="1.9"/></svg>
<div class="a" style="left:29px;top:186px;width:11px;height:1px;background:repeating-linear-gradient(90deg,#777 0 1px,transparent 1px 2px)"></div>
<svg style="left:40px;top:179px" width="16" height="14" viewBox="0 0 16 14"><use href="#foldT" x="0" y="0" width="16" height="14"/></svg>
<div class="cb2" style="left:58px;top:180px"></div>
<svg style="left:58px;top:180px" width="13" height="13"><path d="M3 6.5L5.5 9.5L10 3.5" fill="none" stroke="#e05a10" stroke-width="2"/></svg>
<div class="t" style="left:77px;top:180px">Eigene&nbsp;Dateien</div>
<svg style="left:18px;top:198px" width="7" height="9"><path d="M0.8 0.8L4.8 4.5L0.8 8.2" fill="none" stroke="#a0a0a0" stroke-width="1.9"/></svg>
<div class="a" style="left:29px;top:202px;width:11px;height:1px;background:repeating-linear-gradient(90deg,#777 0 1px,transparent 1px 2px)"></div>
<svg style="left:40px;top:195px" width="16" height="14" viewBox="0 0 16 14"><use href="#foldT" x="0" y="0" width="16" height="14"/></svg>
<div class="cb2" style="left:58px;top:196px"></div>
<div class="t" style="left:77px;top:196px">exe</div>
<svg style="left:18px;top:214px" width="7" height="9"><path d="M0.8 0.8L4.8 4.5L0.8 8.2" fill="none" stroke="#a0a0a0" stroke-width="1.9"/></svg>
<div class="a" style="left:29px;top:218px;width:11px;height:1px;background:repeating-linear-gradient(90deg,#777 0 1px,transparent 1px 2px)"></div>
<svg style="left:40px;top:211px" width="16" height="14" viewBox="0 0 16 14"><use href="#foldT" x="0" y="0" width="16" height="14"/></svg>
<div class="cb2" style="left:58px;top:212px"></div>
<div class="t" style="left:77px;top:212px">Gif</div>
</div>
<div class="a" style="left:442px;top:399px;width:16px;height:214px;background:#f0f0f0"></div>
<div class="a" style="left:442px;top:416px;width:16px;height:102px;background:#cdcdcd"></div>
<svg style="left:446px;top:405px" width="8" height="6"><path d="M0.6 5.4L3.8 1.9L7 5.4" fill="none" stroke="#5a5a5a" stroke-width="2.1"/></svg>
<svg style="left:446px;top:602px" width="8" height="6"><path d="M0.6 0.8L3.8 4.3L7 0.8" fill="none" stroke="#5a5a5a" stroke-width="2.1"/></svg>
<svg style="left:444px;top:374px" width="16" height="18"><path d="M1.5 8Q2 1 8 1Q11.5 1 13 3.8L15.2 1.3V8.6H8.2L10.6 6.2Q9.6 4.6 8 4.6Q5 4.6 4.6 8Z" fill="#b8b8b8" stroke="#5a5a5a" stroke-width="1.1" stroke-linejoin="round"/><path d="M14.5 10Q14 17 8 17Q4.5 17 3 14.2L0.8 16.7V9.4H7.8L5.4 11.8Q6.4 13.4 8 13.4Q11 13.4 11.4 10Z" fill="#b8b8b8" stroke="#5a5a5a" stroke-width="1.1" stroke-linejoin="round"/></svg>
<div class="t" style="left:467px;top:376px">13 files totaling 87,3 KiB</div>
<div class="a" style="left:462px;top:403px;width:150px;height:212px;border:1px solid #dcdcdc;border-left-color:transparent;box-shadow:inset 0 1px 0 #fff,1px 1px 0 #fff"></div>
<div class="t" style="left:468px;top:397px;padding:0 2px 0 0;background:#f0f0f0">Directory filters</div>
<div class="lb" style="left:466px;top:413px;width:141px;height:115px"></div>
<div class="t" style="left:469px;top:415px;color:#000">backups*</div>
<div class="a" style="left:468px;top:428px;width:137px;height:13px;background:#3399ff"></div>
<div class="t" style="left:469px;top:428px;color:#fff">##*</div>
<div class="t" style="left:469px;top:441px;color:#000">bak-???</div>
<div class="t" style="left:469px;top:454px;color:#000">temp*</div>
<div class="a" style="left:468px;top:467px;width:137px;height:13px;background:#3399ff"></div>
<div class="t" style="left:469px;top:467px;color:#fff">.@*</div>
<div class="btn" style="left:467px;top:532px;width:139px;height:24px"></div>
<div class="t" style="left:518px;top:539px">Edit</div>
<div class="btn" style="left:467px;top:559px;width:139px;height:24px"></div>
<div class="t" style="left:518px;top:566px">Apply</div>
<div class="btn" style="left:467px;top:586px;width:139px;height:24px"></div>
<div class="t" style="left:518px;top:593px">Remove</div>
<svg style="left:489px;top:539px" width="16" height="12"><path d="M0.8 0.8H15.2V3L9.5 7V11.2H6.5V7L0.8 3Z" fill="#ff2a2a" stroke="#111" stroke-width="1.2"/></svg>
<svg style="left:484px;top:562px" width="21" height="18"><path d="M6 0.8H20V3L14.8 7V11H11.5V7L6 3Z" fill="#ff6040" stroke="#c83a20" stroke-width="1"/><path d="M0.8 12.5L5 8.5V11H12V14H5V16.5Z" fill="#40b040" stroke="#1e8a1e" stroke-width="0.9"/></svg>
<svg style="left:484px;top:589px" width="21" height="18"><path d="M6 0.8H20V3L14.8 7V11H11.5V7L6 3Z" fill="#4a98e8" stroke="#1e5aa8" stroke-width="1"/><path d="M12.5 12.5L8.3 8.5V11H1V14H8.3V16.5Z" fill="#ff4a4a" stroke="#c02020" stroke-width="0.9"/></svg>
<div class="a" style="left:623px;top:33px;width:249px;height:549px;border:1px solid #dadada"></div>
<div class="a" style="left:624px;top:34px;width:247px;height:547px;border-style:solid;border-color:#fff;border-width:3px 1px 1px 3px"></div>
<div class="t" style="left:629px;top:44px">Select directory to be backed up</div>
<div class="edit" style="left:629px;top:62px;width:206px;height:21px"></div>
<div class="t" style="left:631px;top:66px">E:\Butest\BuTest-1</div>
<div class="btn" style="left:842px;top:63px;width:21px;height:20px"></div>
<svg style="left:844px;top:66px" width="16" height="15"><rect x="0.5" y="0.5" width="15" height="6" fill="#fff" stroke="#c0392b" stroke-width="1"/><rect x="3" y="2" width="2.5" height="3" fill="#1e4a8a"/><rect x="6.8" y="2" width="2.5" height="3" fill="#1e4a8a"/><rect x="10.6" y="2" width="2.5" height="3" fill="#1e4a8a"/><path d="M1.5 8H14.5L8 14.5Z" fill="#ff7a30"/></svg>
<div class="btn" style="left:630px;top:91px;width:144px;height:39px"></div>
<div class="t" style="left:677px;top:99px;width:93px;text-align:center;height:26px">Add directories<br>to task</div>
<svg style="left:644px;top:94px" width="32" height="33"><path d="M11.0 1.5Q11.0 0.5 12.0 0.5H18.0L19.5 2H30.0Q31.0 2 31.0 3V16H10.0V3Q10.0 1.5 11.0 1.5Z" fill="#ffe46a" stroke="#2a5aa0" stroke-width="0.8" stroke-dasharray="1.2 0.8"/><rect x="10.0" y="3.5" width="21" height="12.5" fill="url(#gFoldY)" stroke="#2a5aa0" stroke-width="0.8" stroke-dasharray="1.2 0.8"/><path d="M10.8 4H30.2" stroke="#fff2b0" stroke-width="1"/><path d="M7.5 4.5Q7.5 3.5 8.5 3.5H14.5L16.0 5H26.5Q27.5 5 27.5 6V19H6.5V6Q6.5 4.5 7.5 4.5Z" fill="#ffe46a" stroke="#2a5aa0" stroke-width="0.8" stroke-dasharray="1.2 0.8"/><rect x="6.5" y="6.5" width="21" height="12.5" fill="url(#gFoldY)" stroke="#2a5aa0" stroke-width="0.8" stroke-dasharray="1.2 0.8"/><path d="M7.3 7H26.7" stroke="#fff2b0" stroke-width="1"/><path d="M4.0 7.5Q4.0 6.5 5.0 6.5H11.0L12.5 8H23.0Q24.0 8 24.0 9V22H3.0V9Q3.0 7.5 4.0 7.5Z" fill="#ffe46a" stroke="#2a5aa0" stroke-width="0.8" stroke-dasharray="1.2 0.8"/><rect x="3.0" y="9.5" width="21" height="12.5" fill="url(#gFoldY)" stroke="#2a5aa0" stroke-width="0.8" stroke-dasharray="1.2 0.8"/><path d="M3.8 10H23.2" stroke="#fff2b0" stroke-width="1"/><path d="M0.5 25L8.5 17V21.5H23V28.5H8.5V32.5Z" fill="url(#gArrowG)" stroke="#1e6a1e" stroke-width="0.9"/></svg>
<div class="btn" style="left:780px;top:91px;width:39px;height:39px"></div>
<div class="btn" style="left:825px;top:91px;width:39px;height:39px"></div>
<svg style="left:784px;top:95px" width="30" height="32"><path d="M5 3Q5 1 7 1H12L13.5 2.5H26V19H5Z" fill="#f5c800" stroke="#2a5aa0" stroke-width="0.8" stroke-dasharray="1 1"/><circle cx="17" cy="9.5" r="6" fill="#fff0a8" stroke="#555" stroke-width="1.6"/><path d="M21.5 14L28.5 21.5" stroke="#1e3f9a" stroke-width="2.6"/><path d="M0.5 24L8 16.8V20.5H22.5V27.5H8V31.5Z" fill="url(#gArrowG)" stroke="#1e6a1e" stroke-width="0.9"/></svg>
<svg style="left:829px;top:95px" width="30" height="32"><path d="M4.5 1H21.5V20H4.5Z" fill="#fff" stroke="#333" stroke-width="1"/><path d="M7 5h8" stroke="#555" stroke-width="1"/><path d="M7 7.5h8" stroke="#555" stroke-width="1"/><path d="M7 10h8" stroke="#555" stroke-width="1"/><path d="M7 12.5h8" stroke="#555" stroke-width="1"/><path d="M7 15h8" stroke="#555" stroke-width="1"/><circle cx="17" cy="9.5" r="6" fill="rgba(240,240,240,0.8)" stroke="#555" stroke-width="1.6"/><path d="M21.5 14L28.5 21.5" stroke="#1e3f9a" stroke-width="2.6"/><path d="M0.5 24L8 16.8V20.5H22.5V27.5H8V31.5Z" fill="url(#gArrowG)" stroke="#1e6a1e" stroke-width="0.9"/></svg>
<div class="lb" style="left:632px;top:137px;width:236px;height:438px"></div>
<div class="a" style="left:633px;top:138px;width:217px;height:419px;overflow:hidden">
<div class="a" style="left:12px;top:0;width:1px;height:418px;background:repeating-linear-gradient(180deg,#555 0 1px,transparent 1px 2px)"></div>
<div class="a" style="left:31px;top:0;width:1px;height:418px;background:repeating-linear-gradient(180deg,#555 0 1px,transparent 1px 2px)"></div>
<div class="a" style="left:50px;top:17px;width:1px;height:401px;background:repeating-linear-gradient(180deg,#555 0 1px,transparent 1px 2px)"></div>
<svg style="left:45px;top:6px" width="10" height="6"><path d="M0.8 0.8L5 5L9.2 0.8" fill="none" stroke="#333" stroke-width="1.6"/></svg>
<div class="a" style="left:58px;top:9px;width:3px;height:1px;background:repeating-linear-gradient(90deg,#555 0 1px,transparent 1px 2px)"></div>
<svg style="left:63px;top:1px" width="13" height="16" viewBox="0 0 13 16"><use href="#foldR" x="0" y="0" width="13" height="16"/></svg>
<div class="t" style="left:81px;top:3px">Butest</div>
<svg style="left:66px;top:21px" width="7" height="9"><path d="M0.8 0.8L4.8 4.5L0.8 8.2" fill="none" stroke="#a0a0a0" stroke-width="1.9"/></svg>
<div class="a" style="left:77px;top:25px;width:3px;height:1px;background:repeating-linear-gradient(90deg,#555 0 1px,transparent 1px 2px)"></div>
<svg style="left:82px;top:17px" width="13" height="16" viewBox="0 0 13 16"><use href="#foldR" x="0" y="0" width="13" height="16"/></svg>
<div class="t" style="left:100px;top:19px">Bilder</div>
<svg style="left:66px;top:37px" width="7" height="9"><path d="M0.8 0.8L4.8 4.5L0.8 8.2" fill="none" stroke="#a0a0a0" stroke-width="1.9"/></svg>
<div class="a" style="left:77px;top:41px;width:3px;height:1px;background:repeating-linear-gradient(90deg,#555 0 1px,transparent 1px 2px)"></div>
<svg style="left:82px;top:33px" width="13" height="16" viewBox="0 0 13 16"><use href="#foldR" x="0" y="0" width="13" height="16"/></svg>
<div class="t" style="left:100px;top:35px">Bu010Test</div>
<svg style="left:66px;top:53px" width="7" height="9"><path d="M0.8 0.8L4.8 4.5L0.8 8.2" fill="none" stroke="#a0a0a0" stroke-width="1.9"/></svg>
<div class="a" style="left:77px;top:57px;width:3px;height:1px;background:repeating-linear-gradient(90deg,#555 0 1px,transparent 1px 2px)"></div>
<svg style="left:82px;top:49px" width="13" height="16" viewBox="0 0 13 16"><use href="#foldR" x="0" y="0" width="13" height="16"/></svg>
<div class="t" style="left:100px;top:51px">Bu050Test</div>
<svg style="left:66px;top:69px" width="7" height="9"><path d="M0.8 0.8L4.8 4.5L0.8 8.2" fill="none" stroke="#a0a0a0" stroke-width="1.9"/></svg>
<div class="a" style="left:77px;top:73px;width:3px;height:1px;background:repeating-linear-gradient(90deg,#555 0 1px,transparent 1px 2px)"></div>
<svg style="left:82px;top:65px" width="13" height="16" viewBox="0 0 13 16"><use href="#foldR" x="0" y="0" width="13" height="16"/></svg>
<div class="t" style="left:100px;top:67px">Bu100Dateien</div>
<svg style="left:66px;top:85px" width="7" height="9"><path d="M0.8 0.8L4.8 4.5L0.8 8.2" fill="none" stroke="#a0a0a0" stroke-width="1.9"/></svg>
<div class="a" style="left:77px;top:89px;width:3px;height:1px;background:repeating-linear-gradient(90deg,#555 0 1px,transparent 1px 2px)"></div>
<svg style="left:82px;top:81px" width="13" height="16" viewBox="0 0 13 16"><use href="#foldR" x="0" y="0" width="13" height="16"/></svg>
<div class="t" style="left:100px;top:83px">Bu100Test</div>
<svg style="left:66px;top:101px" width="7" height="9"><path d="M0.8 0.8L4.8 4.5L0.8 8.2" fill="none" stroke="#a0a0a0" stroke-width="1.9"/></svg>
<div class="a" style="left:77px;top:105px;width:3px;height:1px;background:repeating-linear-gradient(90deg,#555 0 1px,transparent 1px 2px)"></div>
<svg style="left:82px;top:97px" width="13" height="16" viewBox="0 0 13 16"><use href="#foldR" x="0" y="0" width="13" height="16"/></svg>
<div class="t" style="left:100px;top:99px">Bu250Test</div>
<svg style="left:66px;top:117px" width="7" height="9"><path d="M0.8 0.8L4.8 4.5L0.8 8.2" fill="none" stroke="#a0a0a0" stroke-width="1.9"/></svg>
<div class="a" style="left:77px;top:121px;width:3px;height:1px;background:repeating-linear-gradient(90deg,#555 0 1px,transparent 1px 2px)"></div>
<svg style="left:82px;top:113px" width="13" height="16" viewBox="0 0 13 16"><use href="#foldR" x="0" y="0" width="13" height="16"/></svg>
<div class="t" style="left:100px;top:115px">Bu5000Dateien</div>
<svg style="left:66px;top:133px" width="7" height="9"><path d="M0.8 0.8L4.8 4.5L0.8 8.2" fill="none" stroke="#a0a0a0" stroke-width="1.9"/></svg>
<div class="a" style="left:77px;top:137px;width:3px;height:1px;background:repeating-linear-gradient(90deg,#555 0 1px,transparent 1px 2px)"></div>
<svg style="left:82px;top:129px" width="13" height="16" viewBox="0 0 13 16"><use href="#foldR" x="0" y="0" width="13" height="16"/></svg>
<div class="t" style="left:100px;top:131px">Bu60000Dateien</div>
<div class="a" style="left:78px;top:145px;width:70px;height:16px;background:#cce8ff"></div>
<svg style="left:66px;top:149px" width="7" height="9"><path d="M0.8 0.8L4.8 4.5L0.8 8.2" fill="none" stroke="#a0a0a0" stroke-width="1.9"/></svg>
<div class="a" style="left:77px;top:153px;width:3px;height:1px;background:repeating-linear-gradient(90deg,#555 0 1px,transparent 1px 2px)"></div>
<svg style="left:82px;top:145px" width="13" height="16" viewBox="0 0 13 16"><use href="#foldR" x="0" y="0" width="13" height="16"/></svg>
<div class="t" style="left:100px;top:147px">BuTest-1</div>
<svg style="left:66px;top:165px" width="7" height="9"><path d="M0.8 0.8L4.8 4.5L0.8 8.2" fill="none" stroke="#a0a0a0" stroke-width="1.9"/></svg>
<div class="a" style="left:77px;top:169px;width:3px;height:1px;background:repeating-linear-gradient(90deg,#555 0 1px,transparent 1px 2px)"></div>
<svg style="left:82px;top:161px" width="13" height="16" viewBox="0 0 13 16"><use href="#foldR" x="0" y="0" width="13" height="16"/></svg>
<div class="t" style="left:100px;top:163px">BuTest-2</div>
<svg style="left:66px;top:181px" width="7" height="9"><path d="M0.8 0.8L4.8 4.5L0.8 8.2" fill="none" stroke="#a0a0a0" stroke-width="1.9"/></svg>
<div class="a" style="left:77px;top:185px;width:3px;height:1px;background:repeating-linear-gradient(90deg,#555 0 1px,transparent 1px 2px)"></div>
<svg style="left:82px;top:177px" width="13" height="16" viewBox="0 0 13 16"><use href="#foldR" x="0" y="0" width="13" height="16"/></svg>
<div class="t" style="left:100px;top:179px">BuTest-3</div>
<svg style="left:66px;top:197px" width="7" height="9"><path d="M0.8 0.8L4.8 4.5L0.8 8.2" fill="none" stroke="#a0a0a0" stroke-width="1.9"/></svg>
<div class="a" style="left:77px;top:201px;width:3px;height:1px;background:repeating-linear-gradient(90deg,#555 0 1px,transparent 1px 2px)"></div>
<svg style="left:82px;top:193px" width="13" height="16" viewBox="0 0 13 16"><use href="#foldR" x="0" y="0" width="13" height="16"/></svg>
<div class="t" style="left:100px;top:195px">BuTest-3D</div>
<svg style="left:66px;top:213px" width="7" height="9"><path d="M0.8 0.8L4.8 4.5L0.8 8.2" fill="none" stroke="#a0a0a0" stroke-width="1.9"/></svg>
<div class="a" style="left:77px;top:217px;width:3px;height:1px;background:repeating-linear-gradient(90deg,#555 0 1px,transparent 1px 2px)"></div>
<svg style="left:82px;top:209px" width="13" height="16" viewBox="0 0 13 16"><use href="#foldR" x="0" y="0" width="13" height="16"/></svg>
<div class="t" style="left:100px;top:211px">BuTest-4</div>
<svg style="left:66px;top:229px" width="7" height="9"><path d="M0.8 0.8L4.8 4.5L0.8 8.2" fill="none" stroke="#a0a0a0" stroke-width="1.9"/></svg>
<div class="a" style="left:77px;top:233px;width:3px;height:1px;background:repeating-linear-gradient(90deg,#555 0 1px,transparent 1px 2px)"></div>
<svg style="left:82px;top:225px" width="13" height="16" viewBox="0 0 13 16"><use href="#foldR" x="0" y="0" width="13" height="16"/></svg>
<div class="t" style="left:100px;top:227px">BuTest-5</div>
<svg style="left:66px;top:245px" width="7" height="9"><path d="M0.8 0.8L4.8 4.5L0.8 8.2" fill="none" stroke="#a0a0a0" stroke-width="1.9"/></svg>
<div class="a" style="left:77px;top:249px;width:3px;height:1px;background:repeating-linear-gradient(90deg,#555 0 1px,transparent 1px 2px)"></div>
<svg style="left:82px;top:241px" width="13" height="16" viewBox="0 0 13 16"><use href="#foldR" x="0" y="0" width="13" height="16"/></svg>
<div class="t" style="left:100px;top:243px">BuTest-6</div>
<svg style="left:66px;top:261px" width="7" height="9"><path d="M0.8 0.8L4.8 4.5L0.8 8.2" fill="none" stroke="#a0a0a0" stroke-width="1.9"/></svg>
<div class="a" style="left:77px;top:265px;width:3px;height:1px;background:repeating-linear-gradient(90deg,#555 0 1px,transparent 1px 2px)"></div>
<svg style="left:82px;top:257px" width="13" height="16" viewBox="0 0 13 16"><use href="#foldR" x="0" y="0" width="13" height="16"/></svg>
<div class="t" style="left:100px;top:259px">BuTest-500</div>
<svg style="left:66px;top:277px" width="7" height="9"><path d="M0.8 0.8L4.8 4.5L0.8 8.2" fill="none" stroke="#a0a0a0" stroke-width="1.9"/></svg>
<div class="a" style="left:77px;top:281px;width:3px;height:1px;background:repeating-linear-gradient(90deg,#555 0 1px,transparent 1px 2px)"></div>
<svg style="left:82px;top:273px" width="13" height="16" viewBox="0 0 13 16"><use href="#foldR" x="0" y="0" width="13" height="16"/></svg>
<div class="t" style="left:100px;top:275px">BuTest-bak</div>
<svg style="left:66px;top:293px" width="7" height="9"><path d="M0.8 0.8L4.8 4.5L0.8 8.2" fill="none" stroke="#a0a0a0" stroke-width="1.9"/></svg>
<div class="a" style="left:77px;top:297px;width:3px;height:1px;background:repeating-linear-gradient(90deg,#555 0 1px,transparent 1px 2px)"></div>
<svg style="left:82px;top:289px" width="13" height="16" viewBox="0 0 13 16"><use href="#foldR" x="0" y="0" width="13" height="16"/></svg>
<div class="t" style="left:100px;top:291px">BuTest-del</div>
<svg style="left:66px;top:309px" width="7" height="9"><path d="M0.8 0.8L4.8 4.5L0.8 8.2" fill="none" stroke="#a0a0a0" stroke-width="1.9"/></svg>
<div class="a" style="left:77px;top:313px;width:3px;height:1px;background:repeating-linear-gradient(90deg,#555 0 1px,transparent 1px 2px)"></div>
<svg style="left:82px;top:305px" width="13" height="16" viewBox="0 0 13 16"><use href="#foldR" x="0" y="0" width="13" height="16"/></svg>
<div class="t" style="left:100px;top:307px">BuTest-f</div>
<svg style="left:66px;top:325px" width="7" height="9"><path d="M0.8 0.8L4.8 4.5L0.8 8.2" fill="none" stroke="#a0a0a0" stroke-width="1.9"/></svg>
<div class="a" style="left:77px;top:329px;width:3px;height:1px;background:repeating-linear-gradient(90deg,#555 0 1px,transparent 1px 2px)"></div>
<svg style="left:82px;top:321px" width="13" height="16" viewBox="0 0 13 16"><use href="#foldR" x="0" y="0" width="13" height="16"/></svg>
<div class="t" style="left:100px;top:323px">BuTest-Filter</div>
<svg style="left:66px;top:341px" width="7" height="9"><path d="M0.8 0.8L4.8 4.5L0.8 8.2" fill="none" stroke="#a0a0a0" stroke-width="1.9"/></svg>
<div class="a" style="left:77px;top:345px;width:3px;height:1px;background:repeating-linear-gradient(90deg,#555 0 1px,transparent 1px 2px)"></div>
<svg style="left:82px;top:337px" width="13" height="16" viewBox="0 0 13 16"><use href="#foldR" x="0" y="0" width="13" height="16"/></svg>
<div class="t" style="left:100px;top:339px">BuTest-Ftp</div>
<svg style="left:66px;top:357px" width="7" height="9"><path d="M0.8 0.8L4.8 4.5L0.8 8.2" fill="none" stroke="#a0a0a0" stroke-width="1.9"/></svg>
<div class="a" style="left:77px;top:361px;width:3px;height:1px;background:repeating-linear-gradient(90deg,#555 0 1px,transparent 1px 2px)"></div>
<svg style="left:82px;top:353px" width="13" height="16" viewBox="0 0 13 16"><use href="#foldR" x="0" y="0" width="13" height="16"/></svg>
<div class="t" style="left:100px;top:355px">BuTest-Ftp1</div>
<svg style="left:66px;top:373px" width="7" height="9"><path d="M0.8 0.8L4.8 4.5L0.8 8.2" fill="none" stroke="#a0a0a0" stroke-width="1.9"/></svg>
<div class="a" style="left:77px;top:377px;width:3px;height:1px;background:repeating-linear-gradient(90deg,#555 0 1px,transparent 1px 2px)"></div>
<svg style="left:82px;top:369px" width="13" height="16" viewBox="0 0 13 16"><use href="#foldR" x="0" y="0" width="13" height="16"/></svg>
<div class="t" style="left:100px;top:371px">BuTest-Ftp2</div>
<svg style="left:66px;top:389px" width="7" height="9"><path d="M0.8 0.8L4.8 4.5L0.8 8.2" fill="none" stroke="#a0a0a0" stroke-width="1.9"/></svg>
<div class="a" style="left:77px;top:393px;width:3px;height:1px;background:repeating-linear-gradient(90deg,#555 0 1px,transparent 1px 2px)"></div>
<svg style="left:82px;top:385px" width="13" height="16" viewBox="0 0 13 16"><use href="#foldR" x="0" y="0" width="13" height="16"/></svg>
<div class="t" style="left:100px;top:387px">BuTest-Ftp3</div>
<svg style="left:66px;top:405px" width="7" height="9"><path d="M0.8 0.8L4.8 4.5L0.8 8.2" fill="none" stroke="#a0a0a0" stroke-width="1.9"/></svg>
<div class="a" style="left:77px;top:409px;width:3px;height:1px;background:repeating-linear-gradient(90deg,#555 0 1px,transparent 1px 2px)"></div>
<svg style="left:82px;top:401px" width="13" height="16" viewBox="0 0 13 16"><use href="#foldR" x="0" y="0" width="13" height="16"/></svg>
<div class="t" style="left:100px;top:403px">BuTest-Ftp4</div>
</div>
<div class="a" style="left:850px;top:139px;width:16px;height:418px;background:#f0f0f0"></div>
<div class="a" style="left:850px;top:220px;width:16px;height:76px;background:#cdcdcd"></div>
<svg style="left:854px;top:145px" width="8" height="6"><path d="M0.6 5.4L3.8 1.9L7 5.4" fill="none" stroke="#5a5a5a" stroke-width="2.1"/></svg>
<svg style="left:854px;top:545px" width="8" height="6"><path d="M0.6 0.8L3.8 4.3L7 0.8" fill="none" stroke="#5a5a5a" stroke-width="2.1"/></svg>
<div class="a" style="left:634px;top:557px;width:232px;height:16px;background:#f0f0f0"></div>
<div class="a" style="left:651px;top:557px;width:146px;height:16px;background:#cdcdcd"></div>
<svg style="left:639px;top:561px" width="6" height="8"><path d="M5.4 0.6L1.9 3.8L5.4 7" fill="none" stroke="#5a5a5a" stroke-width="2.1"/></svg>
<svg style="left:838px;top:561px" width="6" height="8"><path d="M0.8 0.6L4.3 3.8L0.8 7" fill="none" stroke="#5a5a5a" stroke-width="2.1"/></svg>
<div class="btn" style="left:629px;top:589px;width:29px;height:29px"></div>
<svg style="left:634px;top:594px" width="20" height="20"><circle cx="10" cy="10" r="9.5" fill="url(#gInfo)" stroke="#1a4a90" stroke-width="1"/><rect x="8.5" y="4" width="3" height="2.5" fill="#fff"/><path d="M7 8.5H11.5V14H13V16H7V14H8.5V10.5H7Z" fill="#fff"/></svg>
<div class="btn" style="left:664px;top:589px;width:204px;height:29px"></div>
<svg style="left:737px;top:595px" width="18" height="17"><path d="M2.5 2.5L15.5 14.5M15.5 2.5L2.5 14.5" stroke="#0c6a1c" stroke-width="5.2" stroke-linecap="round"/><path d="M2.5 2.5L15.5 14.5M15.5 2.5L2.5 14.5" stroke="#16a02a" stroke-width="3.4" stroke-linecap="round"/></svg>
<div class="t" style="left:772px;top:598px">Close</div>
</body></html>
